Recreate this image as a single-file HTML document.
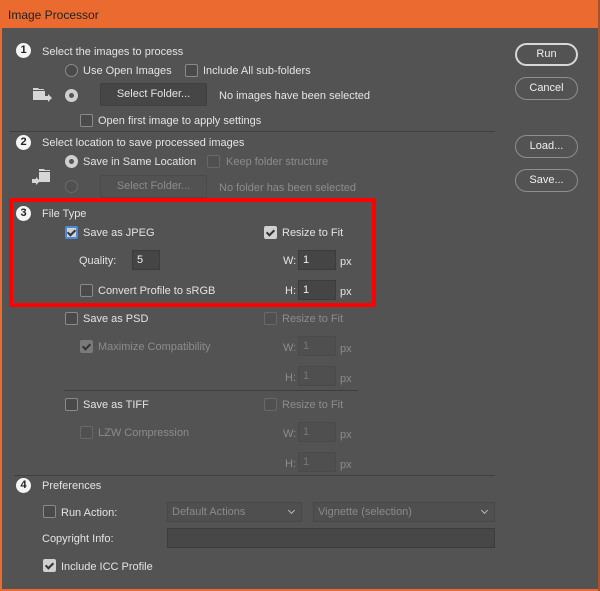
<!DOCTYPE html>
<html><head><meta charset="utf-8"><style>
*{margin:0;padding:0;box-sizing:border-box}
body{width:600px;height:591px;overflow:hidden;background:#ea6a2f;font-family:"Liberation Sans",sans-serif;font-size:11px;color:#e4e4e4;position:relative}
#dlg{position:absolute;left:2px;top:28px;width:596px;height:561px;background:#535353}
#rb{position:absolute;right:0;top:0;width:2px;height:591px;background:#a8522b}
.a{position:absolute}
.t{position:absolute;line-height:14px;white-space:nowrap;margin-top:1px}
.d{color:#8c8c8c}
.num{position:absolute;width:15px;height:15px;border-radius:50%;background:#f4f4f4;color:#222;font-weight:bold;font-size:11px;text-align:center;line-height:15px}
.cb{position:absolute;width:13px;height:13px;border:1px solid #8a8a8a;border-radius:2px;background:#4a4a4a}
.cb.dis{border-color:#686868;background:#505050}
.cb.on{background:#d0d0d0;border-color:#d0d0d0}
.cb.on.dis{background:#7a7a7a;border-color:#7a7a7a}
.cb.on::after{content:"";position:absolute;left:3px;top:1px;width:3px;height:6px;border:solid #333;border-width:0 2px 2px 0;transform:rotate(45deg)}
.cb.foc{border:2px solid #4b8ad8}
.cb.foc::after{left:2px;top:0px}
.rd{position:absolute;width:13px;height:13px;border-radius:50%;border:1px solid #8a8a8a;background:#4a4a4a}
.rd.on{background:#cfcfcf;border-color:#cfcfcf}
.rd.on::after{content:"";position:absolute;left:3px;top:3px;width:5px;height:5px;border-radius:50%;background:#555}
.rd.dis{border-color:#6a6a6a;background:#505050}
.btn{position:absolute;background:#464646;border:1px solid #3f3f3f;border-radius:2px;text-align:center;line-height:21px}
.inp{position:absolute;background:#454545;border:1px solid #3c3c3c;padding-left:4px;line-height:19px;color:#f0f0f0}
.inp.dis{background:#4f4f4f;border-color:#4a4a4a;color:#777}
.pb{position:absolute;width:63px;height:23px;border:1px solid #8e8e8e;border-radius:12px;text-align:center;line-height:21px;color:#f0f0f0}
.pb.def{border:2px solid #d8d8d8;line-height:19px}
.sep{position:absolute;height:1px;background:#3e3e3e}
.dd{position:absolute;height:20px;background:#4f4f4f;border:1px solid #484848;color:#8a8a8a;padding-left:4px;line-height:19px}
.dd::after{content:"";position:absolute;right:7px;top:5px;width:4px;height:4px;border:solid #bbb;border-width:0 1.5px 1.5px 0;transform:rotate(45deg)}
</style></head><body>
<div class="t" style="left:8px;top:7px;font-size:12px;color:#222">Image Processor</div>
<div id="dlg"></div>
<div id="rb"></div>

<div class="num" style="left:16px;top:43px">1</div>
<div class="t" style="left:42px;top:44px">Select the images to process</div>
<div class="rd" style="left:65px;top:64px"></div><div class="t" style="left:83px;top:63px">Use Open Images</div>
<div class="cb" style="left:185px;top:64px"></div><div class="t" style="left:203px;top:63px">Include All sub-folders</div>
<svg class="a" style="left:32px;top:87px" width="22" height="16"><path d="M1 1h5l1 1h5v1H1z" fill="#d6d6d6"/><path d="M1 4h12v9H1z" fill="#d6d6d6"/><path d="M13 9h3v-2l4 4-4 4v-2h-3z" fill="#d6d6d6"/></svg>
<div class="rd on" style="left:65px;top:89px"></div>
<div class="btn" style="left:100px;top:83px;width:107px;height:23px">Select Folder...</div>
<div class="t" style="left:219px;top:88px">No images have been selected</div>
<div class="cb" style="left:80px;top:114px"></div><div class="t" style="left:98px;top:113px">Open first image to apply settings</div>
<div class="sep" style="left:10px;top:131px;width:485px"></div>

<div class="num" style="left:16px;top:135px">2</div>
<div class="t" style="left:42px;top:135px">Select location to save processed images</div>
<div class="rd on" style="left:65px;top:155px"></div><div class="t" style="left:83px;top:154px">Save in Same Location</div>
<div class="cb dis" style="left:207px;top:155px"></div><div class="t d" style="left:226px;top:154px">Keep folder structure</div>
<svg class="a" style="left:31px;top:168px" width="22" height="18"><path d="M8 1h5l1 1h5v1H8z" fill="#d6d6d6"/><path d="M8 4h11v10H8z" fill="#d6d6d6"/><path d="M1 11h4v-2l4 4-4 4v-2h-4z" fill="#d6d6d6"/></svg>
<div class="rd dis" style="left:65px;top:180px"></div>
<div class="btn d" style="left:100px;top:175px;width:107px;height:23px;background:#525252;border-color:#4a4a4a">Select Folder...</div>
<div class="t d" style="left:219px;top:180px">No folder has been selected</div>

<div class="a" style="left:9px;top:198px;width:367px;height:109px;border:4px solid #ff0000"></div>

<div class="num" style="left:16px;top:206px">3</div>
<div class="t" style="left:42px;top:206px">File Type</div>
<div class="cb on foc" style="left:65px;top:226px"></div><div class="t" style="left:83px;top:225px">Save as JPEG</div>
<div class="cb on" style="left:264px;top:226px"></div><div class="t" style="left:282px;top:225px">Resize to Fit</div>
<div class="t" style="left:79px;top:253px">Quality:</div>
<div class="inp" style="left:132px;top:250px;width:28px;height:20px">5</div>
<div class="t" style="left:283px;top:253px">W:</div>
<div class="inp" style="left:298px;top:250px;width:38px;height:20px">1</div>
<div class="t" style="left:340px;top:254px">px</div>
<div class="cb" style="left:80px;top:284px"></div><div class="t" style="left:98px;top:283px">Convert Profile to sRGB</div>
<div class="t" style="left:285px;top:283px">H:</div>
<div class="inp" style="left:298px;top:280px;width:38px;height:20px">1</div>
<div class="t" style="left:340px;top:284px">px</div>

<div class="cb" style="left:65px;top:312px"></div><div class="t" style="left:83px;top:311px">Save as PSD</div>
<div class="cb dis" style="left:264px;top:312px"></div><div class="t d" style="left:282px;top:311px">Resize to Fit</div>
<div class="cb on dis" style="left:80px;top:340px"></div><div class="t d" style="left:98px;top:339px">Maximize Compatibility</div>
<div class="t d" style="left:283px;top:340px">W:</div><div class="inp dis" style="left:298px;top:336px;width:38px;height:20px">1</div><div class="t d" style="left:340px;top:341px">px</div>
<div class="t d" style="left:285px;top:370px">H:</div><div class="inp dis" style="left:298px;top:366px;width:38px;height:20px">1</div><div class="t d" style="left:340px;top:371px">px</div>
<div class="sep" style="left:64px;top:390px;width:294px"></div>

<div class="cb" style="left:65px;top:398px"></div><div class="t" style="left:83px;top:397px">Save as TIFF</div>
<div class="cb dis" style="left:264px;top:398px"></div><div class="t d" style="left:282px;top:397px">Resize to Fit</div>
<div class="cb dis" style="left:80px;top:426px"></div><div class="t d" style="left:98px;top:425px">LZW Compression</div>
<div class="t d" style="left:283px;top:426px">W:</div><div class="inp dis" style="left:298px;top:422px;width:38px;height:20px">1</div><div class="t d" style="left:340px;top:427px">px</div>
<div class="t d" style="left:285px;top:456px">H:</div><div class="inp dis" style="left:298px;top:452px;width:38px;height:20px">1</div><div class="t d" style="left:340px;top:457px">px</div>
<div class="sep" style="left:14px;top:475px;width:481px"></div>

<div class="num" style="left:16px;top:478px">4</div>
<div class="t" style="left:42px;top:478px">Preferences</div>
<div class="cb" style="left:43px;top:505px"></div><div class="t" style="left:61px;top:505px">Run Action:</div>
<div class="dd" style="left:167px;top:502px;width:135px">Default Actions</div>
<div class="dd" style="left:313px;top:502px;width:182px">Vignette (selection)</div>
<div class="t" style="left:42px;top:531px">Copyright Info:</div>
<div class="inp" style="left:167px;top:528px;width:328px;height:20px;background:#474747"></div>
<div class="cb on" style="left:43px;top:559px"></div><div class="t" style="left:61px;top:559px">Include ICC Profile</div>

<div class="pb def" style="left:515px;top:43px">Run</div>
<div class="pb" style="left:515px;top:77px">Cancel</div>
<div class="pb" style="left:515px;top:135px">Load...</div>
<div class="pb" style="left:515px;top:169px">Save...</div>
</body></html>
